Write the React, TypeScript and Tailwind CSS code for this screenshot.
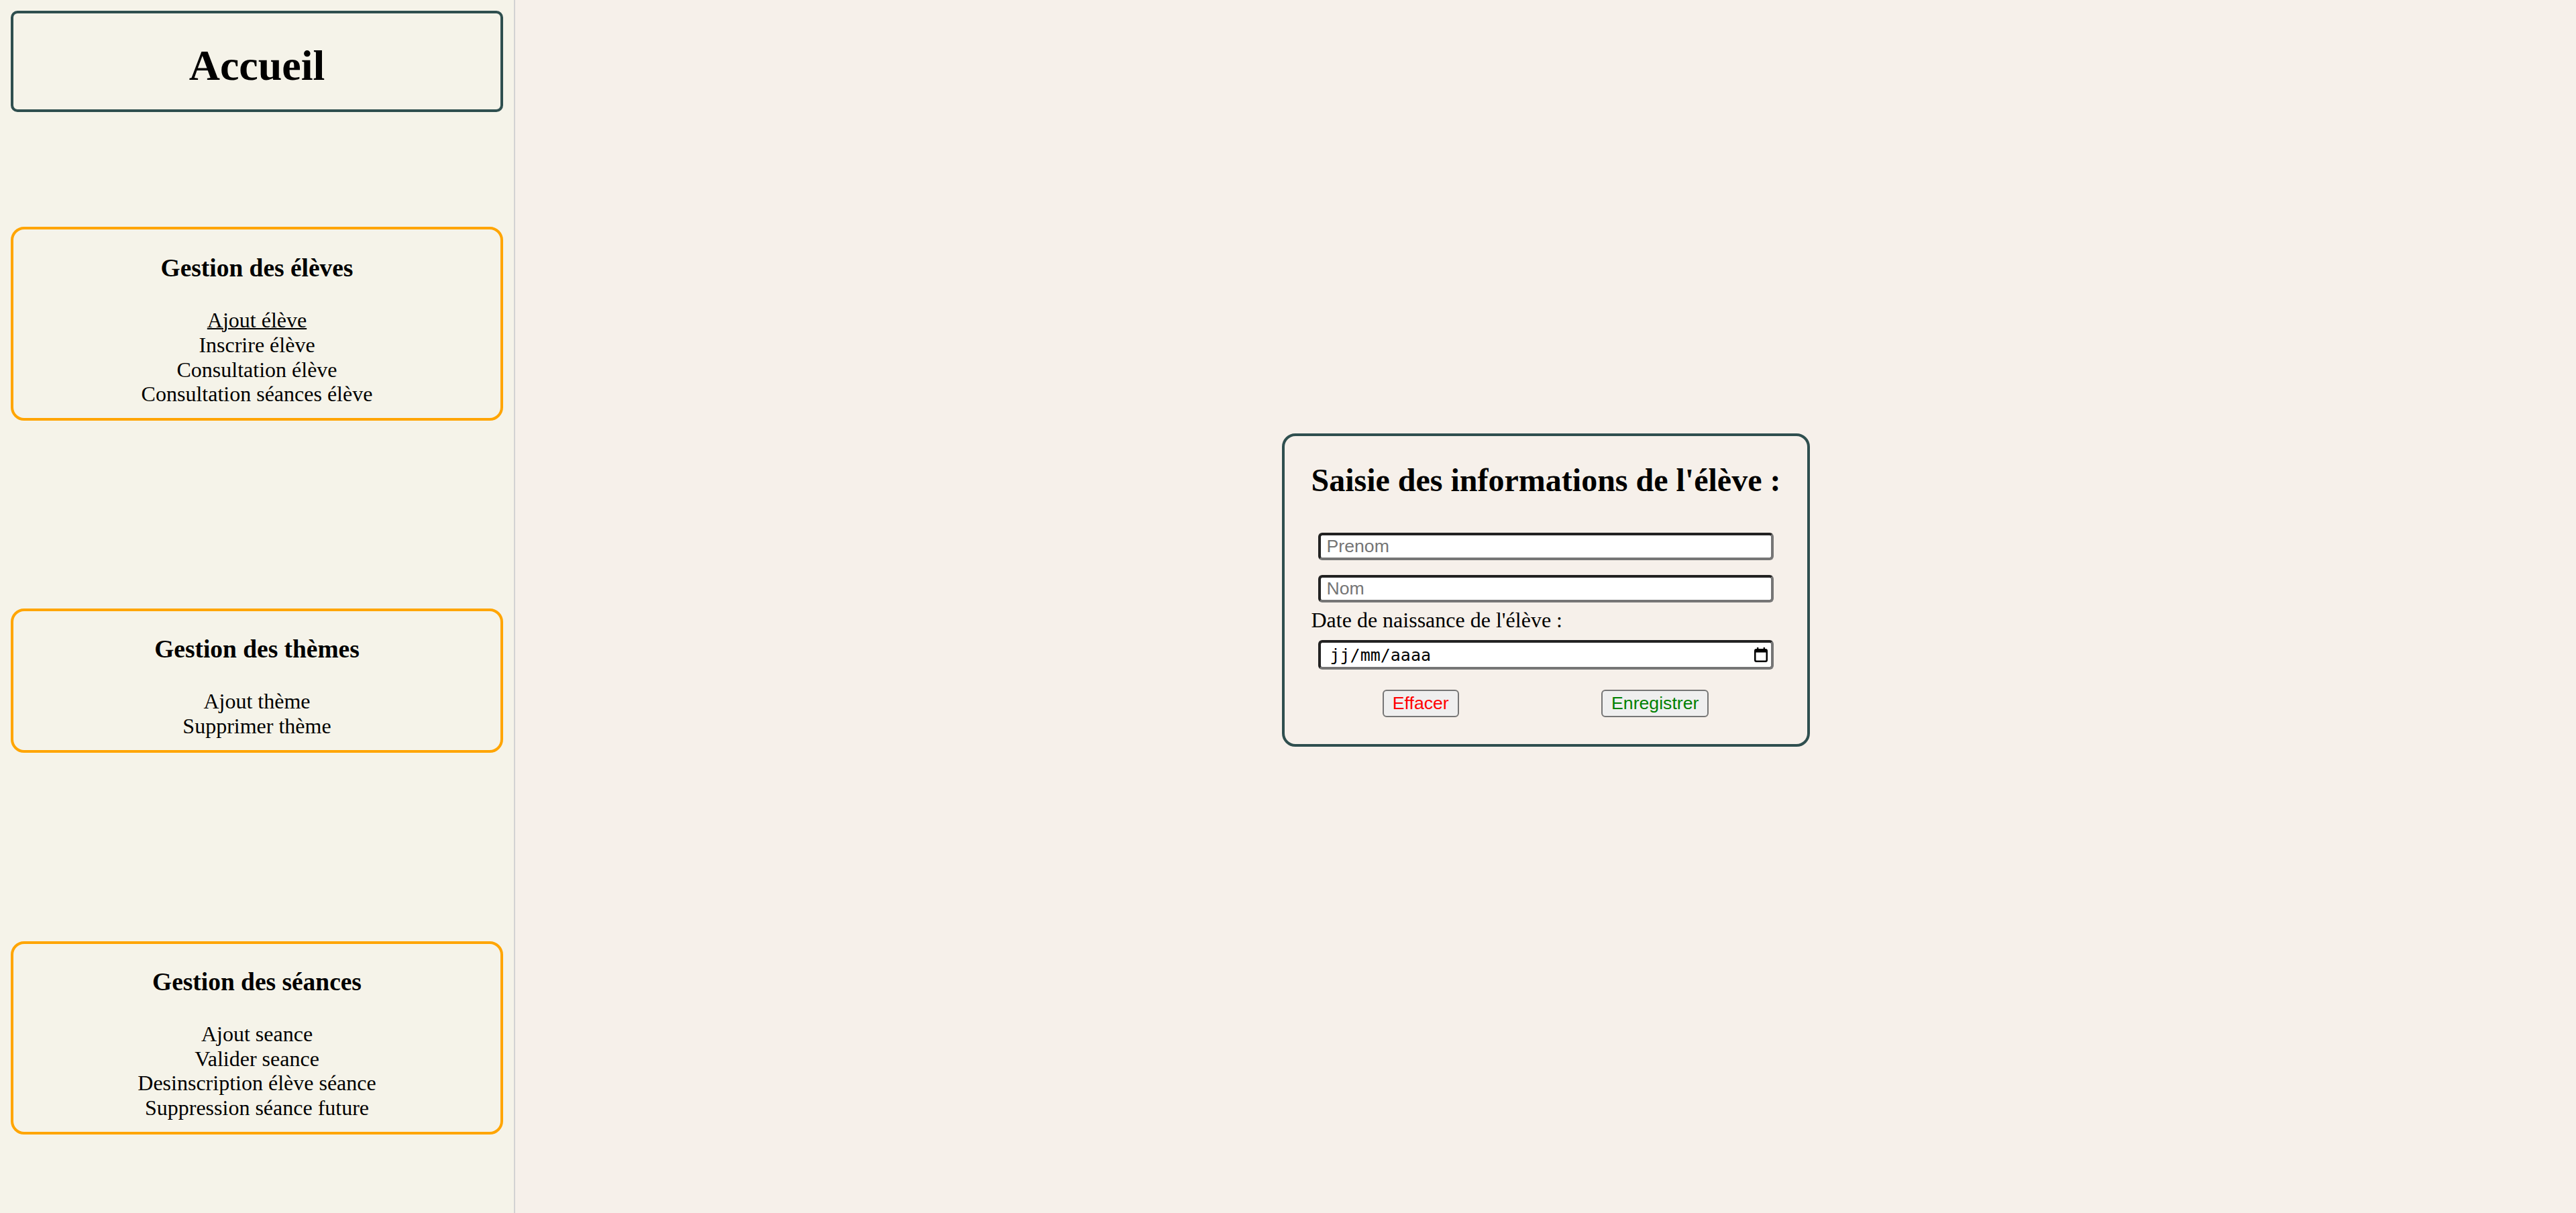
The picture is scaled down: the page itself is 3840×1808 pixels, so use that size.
import React from "react";

function CalendarIcon() {
  return (
    <svg width="20" height="22" viewBox="0 0 20 22" className="block">
      <rect x="4" y="0" width="2.4" height="4" fill="#000" />
      <rect x="13.6" y="0" width="2.4" height="4" fill="#000" />
      <rect x="1.25" y="3.25" width="17.5" height="17.5" rx="2" fill="none" stroke="#000" strokeWidth="2.5" />
      <rect x="1" y="3" width="18" height="4.5" fill="#000" />
    </svg>
  );
}

function MenuBox({
  title,
  items,
  className,
}: {
  title: string;
  items: { label: string; active?: boolean }[];
  className: string;
}) {
  return (
    <div className={`border-4 border-[#ffa500] rounded-[20px] text-center pb-[17px] ${className}`}>
      <h3 className="text-[37.44px] font-bold leading-[43px] mb-[38px] text-black">{title}</h3>
      <ul className="text-[32px] leading-[36.8px] text-black">
        {items.map((it) => (
          <li key={it.label}>
            <a className={it.active ? "underline decoration-[2px] cursor-pointer" : "cursor-pointer"}>{it.label}</a>
          </li>
        ))}
      </ul>
    </div>
  );
}

export default function App() {
  const inputCls =
    "block mx-[10px] w-[calc(100%-20px)] bg-white border-4 border-t-[#222222] border-l-[#222222] border-b-[#767676] border-r-[#767676] rounded-[6px] pl-[9px] text-[26.67px] font-['Liberation_Sans',Arial,sans-serif] text-black placeholder:text-[#757575] outline-none";
  return (
    <div className="flex h-[1808px] w-full font-['Liberation_Serif','Times_New_Roman',serif] text-black">
      <aside className="w-[768px] shrink-0 bg-[#f5f3e9] border-r-2 border-[#d3d3d3] px-4 pt-4 flex flex-col">
        <div className="h-[151px] border-4 border-[#2f4f4f] rounded-[10px] text-center pt-[41px]">
          <h1 className="text-[64px] font-bold leading-[74px]">Accueil</h1>
        </div>
        <MenuBox
          className="mt-[171px] pt-[36px]"
          title="Gestion des élèves"
          items={[
            { label: "Ajout élève", active: true },
            { label: "Inscrire élève" },
            { label: "Consultation élève" },
            { label: "Consultation séances élève" },
          ]}
        />
        <MenuBox
          className="mt-[280px] pt-[35px]"
          title="Gestion des thèmes"
          items={[{ label: "Ajout thème" }, { label: "Supprimer thème" }]}
        />
        <MenuBox
          className="mt-[281px] pt-[35px]"
          title="Gestion des séances"
          items={[
            { label: "Ajout seance" },
            { label: "Valider seance" },
            { label: "Desinscription élève séance" },
            { label: "Suppression séance future" },
          ]}
        />
      </aside>
      <main className="flex-1 bg-[#f6f0ea] flex items-center justify-center pb-[49px]">
        <form className="w-[787px] border-4 border-[#2f4f4f] rounded-[20px] px-[40px] pt-[38px] pb-[40px]">
          <h2 className="text-[48px] font-bold leading-[55px] text-center whitespace-nowrap">
            Saisie des informations de l'élève :
          </h2>
          <input type="text" placeholder="Prenom" className={`${inputCls} mt-[51px] h-[41px]`} />
          <input type="text" placeholder="Nom" className={`${inputCls} mt-[22px] h-[41px]`} />
          <div className="mt-[8px] text-[32px] leading-[37px]">Date de naissance de l'élève :</div>
          <div className="mx-[10px] mt-[11px] h-[44px] bg-white border-4 border-t-[#222222] border-l-[#222222] border-b-[#767676] border-r-[#767676] rounded-[6px] pl-[14px] pr-[5px] flex items-center justify-between">
            <span className="font-['DejaVu_Sans_Mono',monospace] text-[25px] leading-none text-black">jj/mm/aaaa</span>
            <CalendarIcon />
          </div>
          <div className="mt-[30px] flex justify-around">
            <button
              type="button"
              className="w-[114px] h-[41px] bg-[#efefef] border-2 border-[#767676] rounded-[6px] text-[26.67px] font-['Liberation_Sans',Arial,sans-serif] text-[#ff0000] leading-none"
            >
              Effacer
            </button>
            <button
              type="button"
              className="w-[160px] h-[41px] bg-[#efefef] border-2 border-[#767676] rounded-[6px] text-[26.67px] font-['Liberation_Sans',Arial,sans-serif] text-[#008000] leading-none"
            >
              Enregistrer
            </button>
          </div>
        </form>
      </main>
    </div>
  );
}
